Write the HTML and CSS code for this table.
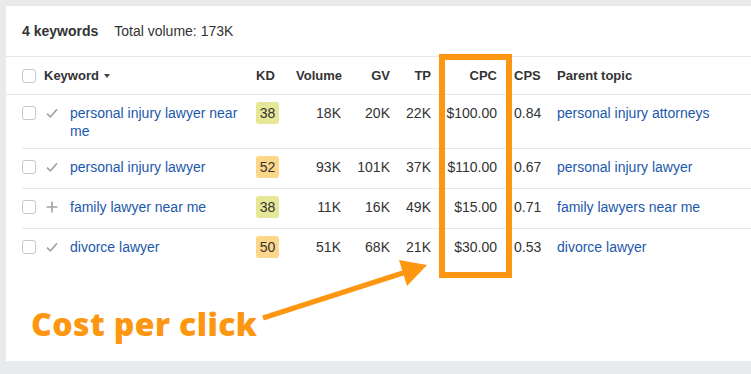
FILE: index.html
```html
<!DOCTYPE html>
<html lang="en">
<head>
<meta charset="utf-8">
<title>Keywords</title>
<link rel="stylesheet" href="styles.css">
</head>
<body>
<div class="panel">
  <div class="summary"><span class="count">4 keywords</span><span class="total">Total volume: 173K</span></div>
  <div class="row head">
    <div class="c-box"><span class="box"></span></div>
    <div class="c-kw">Keyword <span class="caret"></span></div>
    <div class="c-kd">KD</div>
    <div class="num">Volume</div>
    <div class="num">GV</div>
    <div class="num">TP</div>
    <div class="num">CPC</div>
    <div class="c-cps">CPS</div>
    <div class="c-pt">Parent topic</div>
  </div>

  <div class="row body">
    <div class="c-box"><span class="box"></span></div>
    <div class="c-kw"><svg class="ico" viewBox="0 0 12 12"><path d="M1 6.6 L4.4 9.8 L11 2.4"/></svg><a class="link">personal injury lawyer near me</a></div>
    <div class="c-kd"><span class="kd kd-y">38</span></div>
    <div class="num">18K</div>
    <div class="num">20K</div>
    <div class="num">22K</div>
    <div class="num">$100.00</div>
    <div class="c-cps">0.84</div>
    <div class="c-pt"><a class="link">personal injury attorneys</a></div>
  </div>

  <div class="row body">
    <div class="c-box"><span class="box"></span></div>
    <div class="c-kw"><svg class="ico" viewBox="0 0 12 12"><path d="M1 6.6 L4.4 9.8 L11 2.4"/></svg><a class="link">personal injury lawyer</a></div>
    <div class="c-kd"><span class="kd kd-o">52</span></div>
    <div class="num">93K</div>
    <div class="num">101K</div>
    <div class="num">37K</div>
    <div class="num">$110.00</div>
    <div class="c-cps">0.67</div>
    <div class="c-pt"><a class="link">personal injury lawyer</a></div>
  </div>

  <div class="row body">
    <div class="c-box"><span class="box"></span></div>
    <div class="c-kw"><svg class="ico" viewBox="0 0 12 12"><path d="M6 0.5 V11.5 M0.5 6 H11.5"/></svg><a class="link">family lawyer near me</a></div>
    <div class="c-kd"><span class="kd kd-y">38</span></div>
    <div class="num">11K</div>
    <div class="num">16K</div>
    <div class="num">49K</div>
    <div class="num">$15.00</div>
    <div class="c-cps">0.71</div>
    <div class="c-pt"><a class="link">family lawyers near me</a></div>
  </div>

  <div class="row body last">
    <div class="c-box"><span class="box"></span></div>
    <div class="c-kw"><svg class="ico" viewBox="0 0 12 12"><path d="M1 6.6 L4.4 9.8 L11 2.4"/></svg><a class="link">divorce lawyer</a></div>
    <div class="c-kd"><span class="kd kd-o">50</span></div>
    <div class="num">51K</div>
    <div class="num">68K</div>
    <div class="num">21K</div>
    <div class="num">$30.00</div>
    <div class="c-cps">0.53</div>
    <div class="c-pt"><a class="link">divorce lawyer</a></div>
  </div>
</div>

<div class="highlight"></div>
<svg class="arrow" viewBox="0 0 751 374" width="751" height="374">
  <line x1="263" y1="318" x2="406" y2="272" />
  <polygon points="427,265 399,260 407,286" />
</svg>
<div class="callout">Cost per click</div>
</body>
</html>
```

FILE: styles.css
```css
html, body {
  margin: 0;
  padding: 0;
}
body {
  background: #e9eaec;
  font-family: "Liberation Sans", Arial, sans-serif;
  color: #333;
  font-size: 14px;
  width: 751px;
  height: 374px;
  overflow: hidden;
  position: relative;
}
.panel {
  margin: 6px 0 0 6px;
  width: 745px;
  height: 355px;
  background: #fff;
}
.summary {
  height: 50px;
  line-height: 50px;
  padding-left: 16px;
  border-bottom: 1px solid #e7e7e7;
  font-size: 14px;
}
.count {
  font-weight: bold;
  color: #333;
}
.total {
  margin-left: 16px;
  color: #333;
}
.row {
  display: grid;
  grid-template-columns: 22px 212px 40px 45px 49px 41px 66px 60px 1fr;
  box-sizing: border-box;
}
.head {
  height: 38px;
  padding-left: 16px;
  border-bottom: 1px solid #e7e7e7;
  align-items: center;
  font-size: 13px;
  font-weight: bold;
  color: #333;
}
.body {
  margin-left: 16px;
  min-height: 40px;
  padding: 9px 0 8px;
  border-bottom: 1px solid #e7e7e7;
  align-items: start;
  line-height: 18px;
}
.body.last {
  border-bottom: none;
}
.num {
  text-align: right;
}
.c-cps {
  padding-left: 17px;
}
.box {
  display: block;
  width: 12px;
  height: 12px;
  border: 1px solid #c8c8c8;
  border-radius: 3px;
  background: #fff;
}
.body .box {
  margin-top: 2px;
}
.head .c-kw {
  display: flex;
  align-items: center;
}
.caret {
  width: 0;
  height: 0;
  margin-left: 5px;
  border-left: 3.5px solid transparent;
  border-right: 3.5px solid transparent;
  border-top: 4px solid #444;
  margin-top: 1px;
}
.body .c-kw {
  display: flex;
  align-items: flex-start;
  padding-left: 2px;
  padding-right: 14px;
}
.ico {
  flex: none;
  width: 12px;
  height: 12px;
  margin-top: 3px;
  margin-right: 12px;
  fill: none;
  stroke: #a2a2a2;
  stroke-width: 1.6;
}
.link {
  color: #1c58ab;
  text-decoration: none;
}
.kd {
  display: inline-block;
  width: 23px;
  height: 22px;
  line-height: 22px;
  margin: -2px 0;
  vertical-align: top;
  text-align: center;
  border-radius: 3px;
  color: #333;
}
.kd-y {
  background: #e6e796;
}
.kd-o {
  background: #fdd789;
}
.highlight {
  position: absolute;
  left: 439px;
  top: 54px;
  width: 61px;
  height: 212px;
  border: 6px solid #fd9712;
}
.arrow {
  position: absolute;
  left: 0;
  top: 0;
}
.arrow line {
  stroke: #fd9712;
  stroke-width: 5;
}
.arrow polygon {
  fill: #fd9712;
}
.callout {
  position: absolute;
  left: 31px;
  top: 308px;
  font-family: "Open Sans", sans-serif;
  font-weight: 800;
  font-size: 32px;
  line-height: 32px;
  color: #fd9712;
  letter-spacing: 0.4px;
  text-shadow: 0 0 2px #fff, 0 0 2px #fff;
  white-space: nowrap;
}
```
